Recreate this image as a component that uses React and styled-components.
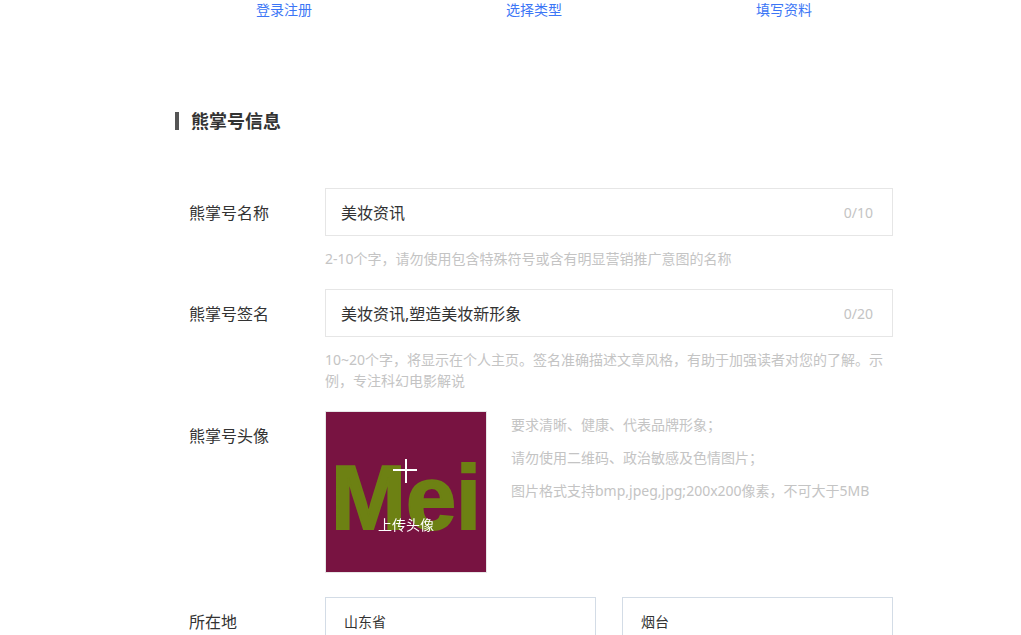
import React, { useState } from "react";
import styled, { createGlobalStyle } from "styled-components";

const steps = ["登录注册", "选择类型", "填写资料"];
const tips = [
  "要求清晰、健康、代表品牌形象；",
  "请勿使用二维码、政治敏感及色情图片；",
  "图片格式支持bmp,jpeg,jpg;200x200像素，不可大于5MB",
];

const TextField = ({ id, label, count, hint, defaultValue }) => {
  const [value, setValue] = useState(defaultValue);

  return (
    <Row>
      <Label htmlFor={id}>{label}</Label>
      <Field>
        <InputBox>
          <Input id={id} value={value} onChange={(e) => setValue(e.target.value)} />
          <Count>{count}</Count>
        </InputBox>
        <Hint>{hint}</Hint>
      </Field>
    </Row>
  );
};

const App = () => {
  return (
    <>
      <GlobalStyle />
      <Page>
        <Steps>
          {steps.map((step) => (
            <Step key={step}>
              <StepLink href="#">{step}</StepLink>
            </Step>
          ))}
        </Steps>
        <Section>
          <Title>熊掌号信息</Title>
          <Form>
            <TextField
              id="name"
              label="熊掌号名称"
              defaultValue="美妆资讯"
              count="0/10"
              hint="2-10个字，请勿使用包含特殊符号或含有明显营销推广意图的名称"
            />
            <TextField
              id="sign"
              label="熊掌号签名"
              defaultValue="美妆资讯,塑造美妆新形象"
              count="0/20"
              hint="10~20个字，将显示在个人主页。签名准确描述文章风格，有助于加强读者对您的了解。示例，专注科幻电影解说"
            />
            <Row $gap={24}>
              <Label htmlFor="avatar">熊掌号头像</Label>
              <AvatarField>
                <Avatar>
                  <FileInput id="avatar" type="file" accept=".bmp,.jpeg,.jpg" />
                  <AvatarImage viewBox="0 0 160 160" aria-hidden="true">
                    <rect width="160" height="160" fill="#781341" />
                    <text x="5" y="117">
                      Mei
                    </text>
                  </AvatarImage>
                  <AvatarMask>
                    <svg width="26" height="24" viewBox="0 0 26 24" aria-hidden="true">
                      <path d="M0 11h24M13 0v24" stroke="#fff" strokeWidth="2" />
                    </svg>
                    <span>上传头像</span>
                  </AvatarMask>
                </Avatar>
                <Tips>
                  {tips.map((tip) => (
                    <li key={tip}>{tip}</li>
                  ))}
                </Tips>
              </AvatarField>
            </Row>
            <Row>
              <Label htmlFor="province">所在地</Label>
              <Selects>
                <Select id="province" defaultValue="山东省">
                  <option>山东省</option>
                </Select>
                <Select aria-label="城市" defaultValue="烟台">
                  <option>烟台</option>
                </Select>
              </Selects>
            </Row>
          </Form>
        </Section>
      </Page>
    </>
  );
};

export default App;

const GlobalStyle = createGlobalStyle`
  * {
    box-sizing: border-box;
  }

  body {
    margin: 0;
    background: #fff;
    color: #333;
    font-family: "Noto Sans", "Noto Sans CJK SC", sans-serif;
    font-size: 14px;
  }

  input,
  select {
    font-family: inherit;
    color: inherit;
  }
`;

const Page = styled.main`
  height: 100vh;
  overflow: hidden;
  padding-left: 47px;
`;

const Steps = styled.ol`
  display: flex;
  max-width: 750px;
  margin: 0 auto 89px;
  padding: 0;
  list-style: none;
`;

const Step = styled.li`
  flex: 1;
  line-height: 20px;
  text-align: center;
`;

const StepLink = styled.a`
  color: #3c76f6;
  text-decoration: none;
`;

const Section = styled.section`
  max-width: 750px;
  margin: 0 auto;
  padding: 0 16px;
`;

const Title = styled.h2`
  display: flex;
  align-items: center;
  gap: 12px;
  margin: 0 0 55px;
  font-size: 18px;
  line-height: 24px;

  &::before {
    content: "";
    width: 4px;
    height: 18px;
    background: #555;
  }
`;

const Form = styled.form`
  padding-left: 14px;
`;

const Row = styled.div`
  display: flex;
  margin-bottom: ${(props) => props.$gap || 20}px;
`;

const Label = styled.label`
  flex: 0 0 136px;
  font-size: 16px;
  line-height: 50px;
  height: 50px;
`;

const Field = styled.div`
  flex: 1;
  min-width: 0;
`;

const InputBox = styled.div`
  display: flex;
  align-items: center;
  height: 48px;
  padding: 0 19px 0 15px;
  border: 1px solid #e6e6e6;
`;

const Input = styled.input`
  flex: 1;
  min-width: 0;
  padding: 0;
  border: 0;
  outline: 0;
  background: none;
  font-size: 16px;
`;

const Count = styled.span`
  color: #c4c4c4;
`;

const Hint = styled.p`
  margin: 12px 0 0;
  color: #c4c4c4;
  line-height: 21px;
`;

const AvatarField = styled.div`
  display: flex;
  flex: 1;
  gap: 24px;
`;

const Avatar = styled.label`
  position: relative;
  flex: none;
  width: 162px;
  height: 162px;
  border: 1px solid #e6e6e6;
  cursor: pointer;
`;

const FileInput = styled.input`
  position: absolute;
  width: 100%;
  height: 100%;
  opacity: 0;
`;

const AvatarImage = styled.svg`
  display: block;
  width: 100%;
  height: 100%;

  text {
    fill: #6d8113;
    stroke: #6d8113;
    stroke-width: 2px;
    font-family: "Liberation Sans", Arial, sans-serif;
    font-size: 90px;
    font-weight: bold;
  }
`;

const AvatarMask = styled.span`
  position: absolute;
  inset: 0;
  display: flex;
  flex-direction: column;
  align-items: center;
  gap: 32px;
  padding-top: 47px;
  color: #fff;
  line-height: 20px;
`;

const Tips = styled.ul`
  display: flex;
  flex-direction: column;
  gap: 12px;
  margin: 0;
  padding: 3px 0 0;
  list-style: none;
  color: #c4c4c4;
  line-height: 21px;
`;

const Selects = styled.div`
  display: grid;
  flex: 1;
  grid-template-columns: 1fr 1fr;
  gap: 26px;
`;

const Select = styled.select`
  height: 48px;
  padding: 0 18px;
  border: 1px solid #d3dce6;
  border-radius: 0;
  outline: 0;
  appearance: none;
  background: #fff;
  font-size: 14px;
`;
